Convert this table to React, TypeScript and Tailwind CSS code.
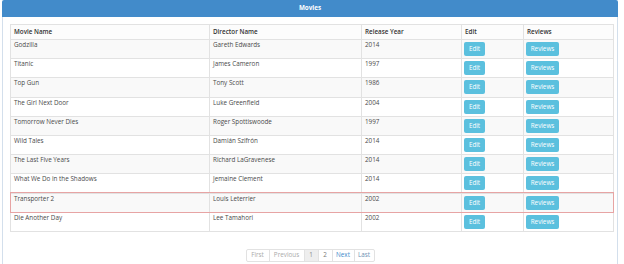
import React from "react";

const movies = [
  ["Godzilla", "Gareth Edwards", "2014"],
  ["Titanic", "James Cameron", "1997"],
  ["Top Gun", "Tony Scott", "1986"],
  ["The Girl Next Door", "Luke Greenfield", "2004"],
  ["Tomorrow Never Dies", "Roger Spottiswoode", "1997"],
  ["Wild Tales", "Damián Szifrón", "2014"],
  ["The Last Five Years", "Richard LaGravenese", "2014"],
  ["What We Do in the Shadows", "Jemaine Clement", "2014"],
  ["Transporter 2", "Louis Leterrier", "2002"],
  ["Die Another Day", "Lee Tamahori", "2002"],
];

export default function App() {
  return (
    <div
      className="w-[624px] h-[264px] overflow-hidden bg-white"
      style={{ fontFamily: '"Open Sans", "Noto Sans", sans-serif' }}
    >
      <div className="ml-[2px] w-[616px] h-[264px] flex flex-col">
        <div className="h-[17px] bg-[#428bca] rounded-t-[2px] flex items-center justify-center text-white text-[6.3px] font-bold leading-none">
          Movies
        </div>
        <div className="flex-1 border-x border-[#d3dfec] pl-[7px] pt-[7px]">
          <div className="w-[604px] border border-[#e2e2e2] text-[6.3px] leading-[8px] text-[#4a4a4a]">
            <div className="flex h-[14px] bg-[#fcfcfc] font-semibold text-[#333] items-center">
              <div className="w-[198px] pl-[3px]">Movie Name</div>
              <div className="w-[152px] pl-[3px] h-full flex items-center border-l border-[#e2e2e2]">Director Name</div>
              <div className="w-[100px] pl-[3px] h-full flex items-center border-l border-[#e2e2e2]">Release Year</div>
              <div className="w-[62px] pl-[3px] h-full flex items-center border-l border-[#e2e2e2]">Edit</div>
              <div className="flex-1 pl-[3px] h-full flex items-center border-l border-[#e2e2e2]">Reviews</div>
            </div>
            {movies.map(([name, director, year], i) => (
              <div
                key={name}
                className={
                  "flex h-[19.2px] border-t border-[#e2e2e2] relative " +
                  (i % 2 === 0 ? "bg-[#f9f9f9] " : "bg-white ") +
                  (name === "Transporter 2" ? "shadow-[0_0_0_1px_#e7a4a4] z-10" : "")
                }
              >
                <div className="w-[198px] pl-[3px] pt-[1px]">{name}</div>
                <div className="w-[152px] pl-[3px] pt-[1px] border-l border-[#e2e2e2]">{director}</div>
                <div className="w-[100px] pl-[3px] pt-[1px] border-l border-[#e2e2e2]">{year}</div>
                <div className="w-[62px] pl-[2px] pt-[2px] border-l border-[#e2e2e2]">
                  <div className="w-[21px] h-[14px] bg-[#5bc0de] rounded-[2px] text-white flex items-center justify-center">
                    Edit
                  </div>
                </div>
                <div className="flex-1 pl-[2px] pt-[2px] border-l border-[#e2e2e2]">
                  <div className="w-[33px] h-[14px] bg-[#5bc0de] rounded-[2px] text-white flex items-center justify-center">
                    Reviews
                  </div>
                </div>
              </div>
            ))}
          </div>
          <div className="flex justify-center mt-[17px] pr-[7px]">
            <div className="flex h-[13px] text-[6.3px] leading-none border border-[#e2e2e2] rounded-[2px]">
              <div className="w-[22px] flex items-center justify-center text-[#aaa]">First</div>
              <div className="w-[35px] flex items-center justify-center text-[#aaa] border-l border-[#e2e2e2]">Previous</div>
              <div className="w-[14px] flex items-center justify-center text-[#888] bg-[#eee] border-l border-[#e2e2e2]">1</div>
              <div className="w-[14px] flex items-center justify-center text-[#777] border-l border-[#e2e2e2]">2</div>
              <div className="w-[22px] flex items-center justify-center text-[#428bca] border-l border-[#e2e2e2]">Next</div>
              <div className="w-[20px] flex items-center justify-center text-[#6f8fb3] border-l border-[#e2e2e2]">Last</div>
            </div>
          </div>
        </div>
      </div>
    </div>
  );
}
